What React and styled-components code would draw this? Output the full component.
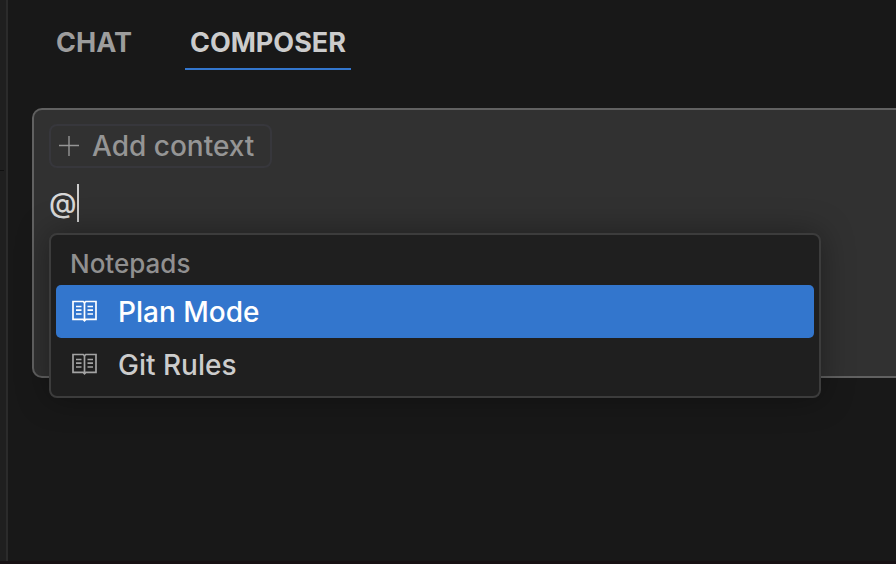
import React, { useState } from 'react';
import styled, { createGlobalStyle } from 'styled-components';

const tabs = ['Chat', 'Composer'];
const notepads = ['Plan Mode', 'Git Rules'];

const NotepadIcon = () => (
  <BookSvg viewBox="0 0 28 28" aria-hidden="true">
    <path d="M13.2 3.5H3v17.8h10.2l1.3 1.4 1.3-1.4H26V3.5H15.8l-1.3 1.3z" />
    <path d="M14.5 4.5v18" />
    <path d="M6 8.5h5.5M6 12.2h5.5M6 16h5.5M17.5 8.5H23M17.5 12.2H23M17.5 16H23" />
  </BookSvg>
);

const PlusIcon = () => (
  <PlusSvg viewBox="0 0 20 20" aria-hidden="true">
    <path d="M10 0v20M0 9.5h20" />
  </PlusSvg>
);

const App = () => {
  const [activeTab, setActiveTab] = useState('Composer');
  const [selected, setSelected] = useState('Plan Mode');
  const [message, setMessage] = useState('@');

  return (
    <Window>
      <GlobalStyle />
      <EditorEdge>
        <EdgeRule />
      </EditorEdge>
      <Panel>
        <TabList role="tablist">
          {tabs.map(tab => (
            <Tab
              key={tab}
              type="button"
              role="tab"
              aria-selected={tab === activeTab}
              $active={tab === activeTab}
              onClick={() => setActiveTab(tab)}
            >
              {tab}
            </Tab>
          ))}
        </TabList>
        <Composer>
          <ContextButton type="button">
            <PlusIcon />
            Add context
          </ContextButton>
          <Prompt>
            <PromptInput
              rows={1}
              aria-label="Message"
              value={message}
              onChange={e => setMessage(e.target.value)}
            />
            <Caret />
            <Menu>
              <MenuHeading id="notepads-heading">Notepads</MenuHeading>
              <MenuList role="listbox" aria-labelledby="notepads-heading">
                {notepads.map(name => (
                  <MenuItem
                    key={name}
                    type="button"
                    role="option"
                    aria-selected={name === selected}
                    $selected={name === selected}
                    onClick={() => setSelected(name)}
                  >
                    <NotepadIcon />
                    {name}
                  </MenuItem>
                ))}
              </MenuList>
            </Menu>
          </Prompt>
        </Composer>
      </Panel>
    </Window>
  );
};

const GlobalStyle = createGlobalStyle`
  * {
    box-sizing: border-box;
  }
  body {
    margin: 0;
    background-color: #181818;
    color: #cccccc;
    font-family: Inter, 'Liberation Sans', sans-serif;
    font-size: 28px;
    font-weight: 500;
  }
  button, textarea {
    margin: 0;
    border: 0;
    background: none;
    color: inherit;
    font: inherit;
  }
  button {
    cursor: pointer;
  }
`;

const Window = styled.div`
  display: flex;
  min-height: 100vh;
  overflow: hidden;
  border-bottom: 3px solid #171114;
`;

const EditorEdge = styled.div`
  flex: none;
  width: 8px;
  padding-top: 170px;
  background-color: #1f1f1f;
  border-right: 2px solid #2b2b2b;
`;

const EdgeRule = styled.div`
  width: 4px;
  height: 1px;
  background-color: #111111;
`;

const Panel = styled.main`
  flex: 1;
  min-width: 0;
  padding: 16px 0 0 24px;
`;

const TabList = styled.div`
  display: flex;
  gap: 48px;
  padding-left: 19px;
`;

const Tab = styled.button`
  padding: 0 5px;
  height: 54px;
  border-bottom: 2px solid ${props => (props.$active ? '#3376cd' : 'transparent')};
  color: ${props => (props.$active ? '#cccccc' : '#9d9d9d')};
  font-size: 27px;
  font-weight: 700;
  text-transform: uppercase;
`;

const Composer = styled.section`
  min-height: 270px;
  margin-top: 38px;
  padding: 14px 0 14px 15px;
  background-color: #313131;
  border: 2px solid #616161;
  border-right: 0;
  border-radius: 10px 0 0 10px;
`;

const ContextButton = styled.button`
  display: flex;
  align-items: center;
  gap: 13px;
  height: 44px;
  padding: 0 16px 0 8px;
  border: 2px solid #37373c;
  border-radius: 8px;
  color: #959595;
`;

const PlusSvg = styled.svg`
  width: 20px;
  height: 20px;
  fill: none;
  stroke: currentColor;
  stroke-width: 1.4;
`;

const Prompt = styled.div`
  position: relative;
  display: flex;
  align-items: center;
  height: 38px;
  margin-top: 16px;
`;

const PromptInput = styled.textarea`
  field-sizing: content;
  padding: 0;
  outline: 0;
  resize: none;
  overflow: hidden;
  color: #d8d8d8;
  line-height: 38px;
  caret-color: transparent;
`;

const Caret = styled.span`
  width: 2px;
  height: 38px;
  background-color: #cccccc;
`;

const Menu = styled.div`
  position: absolute;
  top: calc(100% + 11px);
  left: 0;
  right: 75px;
  padding: 5px;
  background-color: #1f1f1f;
  border: 2px solid #3c3c3c;
  border-radius: 8px;
  box-shadow: 0 0 32px rgba(0, 0, 0, 0.36);
`;

const MenuHeading = styled.div`
  padding: 2px 14px 0;
  color: #909090;
  font-size: 26px;
  line-height: 43px;
`;

const MenuList = styled.div`
  display: flex;
  flex-direction: column;
`;

const MenuItem = styled.button`
  display: flex;
  align-items: center;
  gap: 20px;
  height: 53px;
  padding: 0 14px;
  border-radius: 5px;
  background-color: ${props => (props.$selected ? '#3376cd' : 'transparent')};
  color: ${props => (props.$selected ? '#ffffff' : '#cccccc')};

  svg {
    color: ${props => (props.$selected ? '#ffffff' : '#a3a3a3')};
  }
`;

const BookSvg = styled.svg`
  width: 28px;
  height: 28px;
  fill: none;
  stroke: currentColor;
  stroke-width: 1.7;
`;

export default App;
